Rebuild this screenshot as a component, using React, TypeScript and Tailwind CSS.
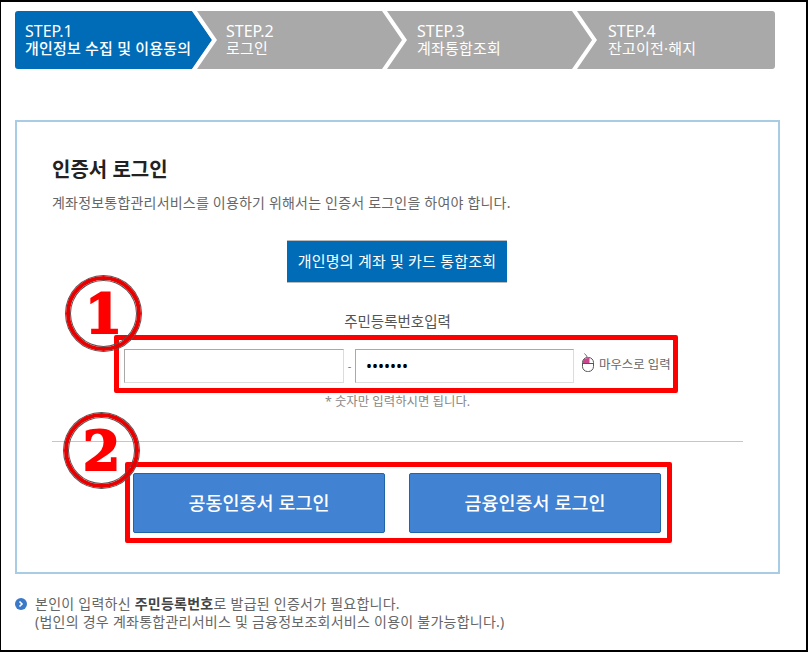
const font = "[font-family:'Noto_Sans','Noto_Sans_CJK_KR',sans-serif]"

const steps = [
  { no: 'STEP.1', label: '개인정보 수집 및 이용동의', className: 'w-[177px] pl-[10px] bg-[#006cb7] rounded-l-[3px] font-medium', fill: '#006cb7' },
  { no: 'STEP.2', label: '로그인', className: 'w-[190px] pl-[34px] bg-[#a9a9a9]', fill: '#a9a9a9' },
  { no: 'STEP.3', label: '계좌통합조회', className: 'w-[190px] pl-[35px] bg-[#a9a9a9]', fill: '#a9a9a9' },
  { no: 'STEP.4', label: '잔고이전·해지', className: 'w-[203px] pl-[36px] bg-[#a9a9a9] rounded-r-[3px]', fill: '' },
]

function Chevron({ fill }: { fill: string }) {
  return (
    <svg className="absolute top-0 left-full z-10" width="25" height="58" viewBox="0 0 25 58">
      <polygon points="0,0 20,29 0,58" fill={fill} />
      <polygon points="0,0 5,0 25,29 5,58 0,58 20,29" fill="#fff" />
    </svg>
  )
}

function Badge({ digit, className }: { digit: string; className: string }) {
  return (
    <div className={`absolute z-20 flex h-[75px] w-[75px] items-center justify-center rounded-full border-[4px] border-[#e80000] shadow-[0_0_0_1px_#555,inset_0_0_0_1px_#555] ${className}`}>
      <span className="[font-family:'DejaVu_Serif',serif] text-[54px] leading-none font-bold text-[#f00] [-webkit-text-stroke:2px_#f00]">{digit}</span>
    </div>
  )
}

export default function App() {
  return (
    <div className={`${font} relative box-border h-[652px] w-[808px] overflow-hidden border-t-2 border-r-[2px] border-b-2 border-l-[1px] border-black bg-white`}>
      {/* steps */}
      <div className="mt-[9px] ml-[14px] flex h-[58px] w-[760px]">
        {steps.map((s) => (
          <div key={s.no} className={`relative flex flex-col justify-center text-white ${s.className}`}>
            <div className="text-[16px] leading-[17px] font-normal">{s.no}</div>
            <div className="text-[15px] leading-[17px] tracking-[0.2px] whitespace-nowrap">{s.label}</div>
            {s.fill && <Chevron fill={s.fill} />}
          </div>
        ))}
      </div>

      {/* card */}
      <div className="mt-[51px] ml-[14px] box-border h-[454px] w-[765px] border-2 border-[#a8cce4] pt-[36px]">
        <h2 className="ml-[35px] text-[20px] leading-[24px] font-bold text-[#222]">인증서 로그인</h2>
        <p className="mt-[13px] ml-[35px] text-[14px] leading-[16px] tracking-[0.2px] text-[#666]">
          계좌정보통합관리서비스를 이용하기 위해서는 인증서 로그인을 하여야 합니다.
        </p>
        <button className="mt-[29px] ml-[270px] block h-[43px] w-[220px] border-y border-[#bbb] bg-[#006cb7] text-[15px] tracking-[0.2px] text-white">
          개인명의 계좌 및 카드 통합조회
        </button>
        <div className="mt-[30px] text-center text-[14.5px] leading-[16px] text-[#555]">주민등록번호입력</div>

        <div className="mt-[6px] ml-[97px] box-border flex h-[58px] w-[564px] items-center rounded-[2px] border-[5px] border-[#f00] pt-[4px] pl-[5px]">
          <input readOnly className="box-border h-[34px] w-[220px] border border-[#dcdcdc] border-t-[#a9a9a9] border-l-[#a9a9a9] bg-white" />
          <span className="w-[11px] text-center text-[11px] text-[#777]">-</span>
          <input
            readOnly
            type="password"
            defaultValue="1234567"
            className="box-border h-[34px] w-[219px] border border-[#dcdcdc] border-t-[#a9a9a9] border-l-[#a9a9a9] bg-white pl-[10px] text-[16px] text-black"
          />
          <svg className="mb-[6px] ml-[7px]" width="14" height="20" viewBox="0 0 14 20" fill="none">
            <path d="M6 4C6 2 4 2 3.5 0.5" stroke="#666" />
            <rect x="1.5" y="4.5" width="11" height="14" rx="5" fill="#fff" stroke="#555" />
            <path d="M2 10.5H12" stroke="#555" />
            <path d="M2 10V8C2 6 4 5 8.5 5V10Z" fill="#c8488f" />
          </svg>
          <span className="mb-[2px] ml-[4px] text-[12.4px] whitespace-nowrap text-[#666]">마우스로 입력</span>
        </div>

        <div className="mt-[2px] text-center text-[12.4px] leading-[14px] text-[#888]">* 숫자만 입력하시면 됩니다.</div>
        <div className="mt-[32px] ml-[35px] h-px w-[691px] bg-[#c6c6c6]" />

        <div className="mt-[20px] ml-[108px] box-border flex h-[81px] w-[547px] items-center gap-[24px] rounded-[2px] border-[5px] border-[#f00] pl-[3px]">
          {['공동인증서 로그인', '금융인증서 로그인'].map((t) => (
            <button key={t} className="h-[60px] w-[252px] rounded-[2px] border border-[#1f66a8] bg-[#4182d2] text-[18.5px] font-medium text-white">
              {t}
            </button>
          ))}
        </div>
      </div>

      {/* note */}
      <div className="mt-[21px] ml-[14px] flex text-[14px] leading-[18px] tracking-[0.25px] text-[#666]">
        <svg className="mt-[3px] shrink-0" width="12" height="12" viewBox="0 0 12 12">
          <circle cx="6" cy="6" r="6" fill="#3a78c8" />
          <path d="M4.5 3.5L7 6L4.5 8.5" stroke="#fff" strokeWidth="1.6" fill="none" />
        </svg>
        <div className="ml-[8px]">
          <p>
            본인이 입력하신 <b className="font-bold text-[#444]">주민등록번호</b>로 발급된 인증서가 필요합니다.
          </p>
          <p>(법인의 경우 계좌통합관리서비스 및 금융정보조회서비스 이용이 불가능합니다.)</p>
        </div>
      </div>

      <Badge digit="1" className="top-[274px] left-[65px]" />
      <Badge digit="2" className="top-[411px] left-[63px]" />
    </div>
  )
}
